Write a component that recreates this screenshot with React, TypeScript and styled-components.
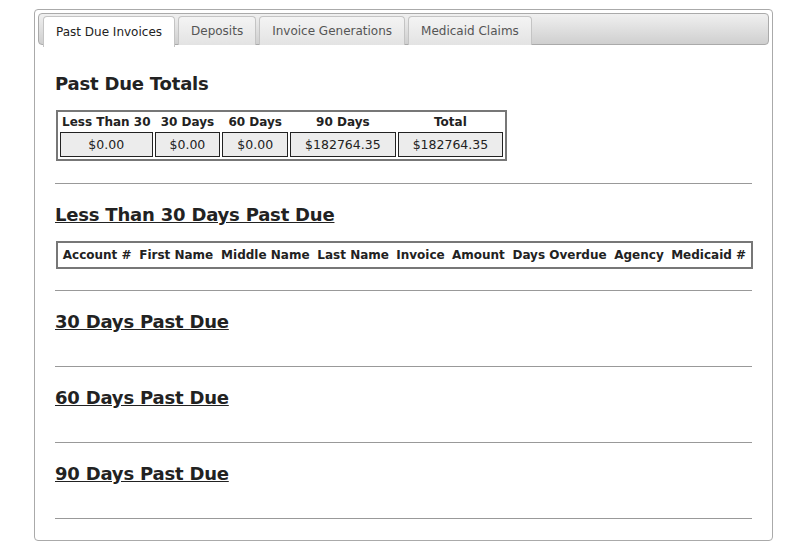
import React from 'react'
import styled, { createGlobalStyle } from 'styled-components'

const Global = createGlobalStyle`
  body { margin: 0; background: #fff; font-family: "DejaVu Sans", Verdana, sans-serif; color: #222; }
`

const Page = styled.div`
  padding: 9px 20px 14px 34px;
  width: 793px;
  box-sizing: border-box;
`
const Panel = styled.div`
  border: 1px solid #aaa;
  border-radius: 4px;
  padding: 3px 3px 21px;
  width: 739px;
  box-sizing: border-box;
`
const TabBar = styled.ul`
  display: flex;
  gap: 3px;
  list-style: none;
  margin: 0;
  padding: 2px 4px 0;
  height: 32px;
  box-sizing: border-box;
  border: 1px solid #aaa;
  border-radius: 4px;
  background: linear-gradient(#f0f0f0, #cfcfcf);
`
const Tab = styled.li<{ $active?: boolean }>`
  height: ${p => (p.$active ? 30 : 28)}px;
  padding: 0 12px;
  display: flex;
  align-items: center;
  font-size: 12px;
  color: ${p => (p.$active ? '#222' : '#555')};
  background: ${p => (p.$active ? '#fff' : 'linear-gradient(#f4f4f4, #e3e3e3)')};
  border: 1px solid #c4c4c4;
  border-bottom: none;
  border-radius: 4px 4px 0 0;
`
const Content = styled.div`
  padding: 0 17px;
`
const Title = styled.h2<{ $underline?: boolean }>`
  font-size: 18px;
  font-weight: bold;
  margin: 0;
  padding: ${p => (p.$underline ? '20px 0 0' : '28px 0 0')};
  text-decoration: ${p => (p.$underline ? 'underline' : 'none')};
  line-height: 22px;
  letter-spacing: -0.2px;
`
const Table = styled.table`
  border: 2px solid #777;
  border-spacing: 2px;
  font-size: 12px;
  margin: 15px 0 0 1px;
`
const Th = styled.th<{ $tall?: boolean }>`
  padding: ${p => (p.$tall ? '3px 2px' : '1px 2px')};
  font-weight: bold;
  white-space: nowrap;
`
const Td = styled.td`
  border: 1px solid #222;
  background: #ececec;
  text-align: center;
  padding: 4px 14px;
  font-size: 12.5px;
`
const Rule = styled.hr`
  border: none;
  border-top: 1px solid #999;
  margin: 0;
`
const Section = styled.div<{ $space: number }>`
  padding-bottom: ${p => p.$space}px;
`

const totals = [
  ['Less Than 30', '$0.00'],
  ['30 Days', '$0.00'],
  ['60 Days', '$0.00'],
  ['90 Days', '$182764.35'],
  ['Total', '$182764.35'],
]
const cols = ['Account #', 'First Name', 'Middle Name', 'Last Name', 'Invoice', 'Amount', 'Days Overdue', 'Agency', 'Medicaid #']

export default function App() {
  return (
    <Page>
      <Global />
      <Panel>
        <TabBar>
          <Tab $active>Past Due Invoices</Tab>
          <Tab>Deposits</Tab>
          <Tab>Invoice Generations</Tab>
          <Tab>Medicaid Claims</Tab>
        </TabBar>
        <Content>
          <Section $space={22}>
            <Title>Past Due Totals</Title>
            <Table>
              <thead>
                <tr>{totals.map(t => <Th key={t[0]}>{t[0]}</Th>)}</tr>
              </thead>
              <tbody>
                <tr>{totals.map(t => <Td key={t[0]}>{t[1]}</Td>)}</tr>
              </tbody>
            </Table>
          </Section>
          <Rule />
          <Section $space={21}>
            <Title $underline>Less Than 30 Days Past Due</Title>
            <Table style={{ width: '100%' }}>
              <thead>
                <tr>{cols.map(c => <Th $tall key={c}>{c}</Th>)}</tr>
              </thead>
            </Table>
          </Section>
          {['30 Days Past Due', '60 Days Past Due', '90 Days Past Due'].map(t => (
            <React.Fragment key={t}>
              <Rule />
              <Section $space={33}>
                <Title $underline>{t}</Title>
              </Section>
            </React.Fragment>
          ))}
          <Rule />
        </Content>
      </Panel>
    </Page>
  )
}
